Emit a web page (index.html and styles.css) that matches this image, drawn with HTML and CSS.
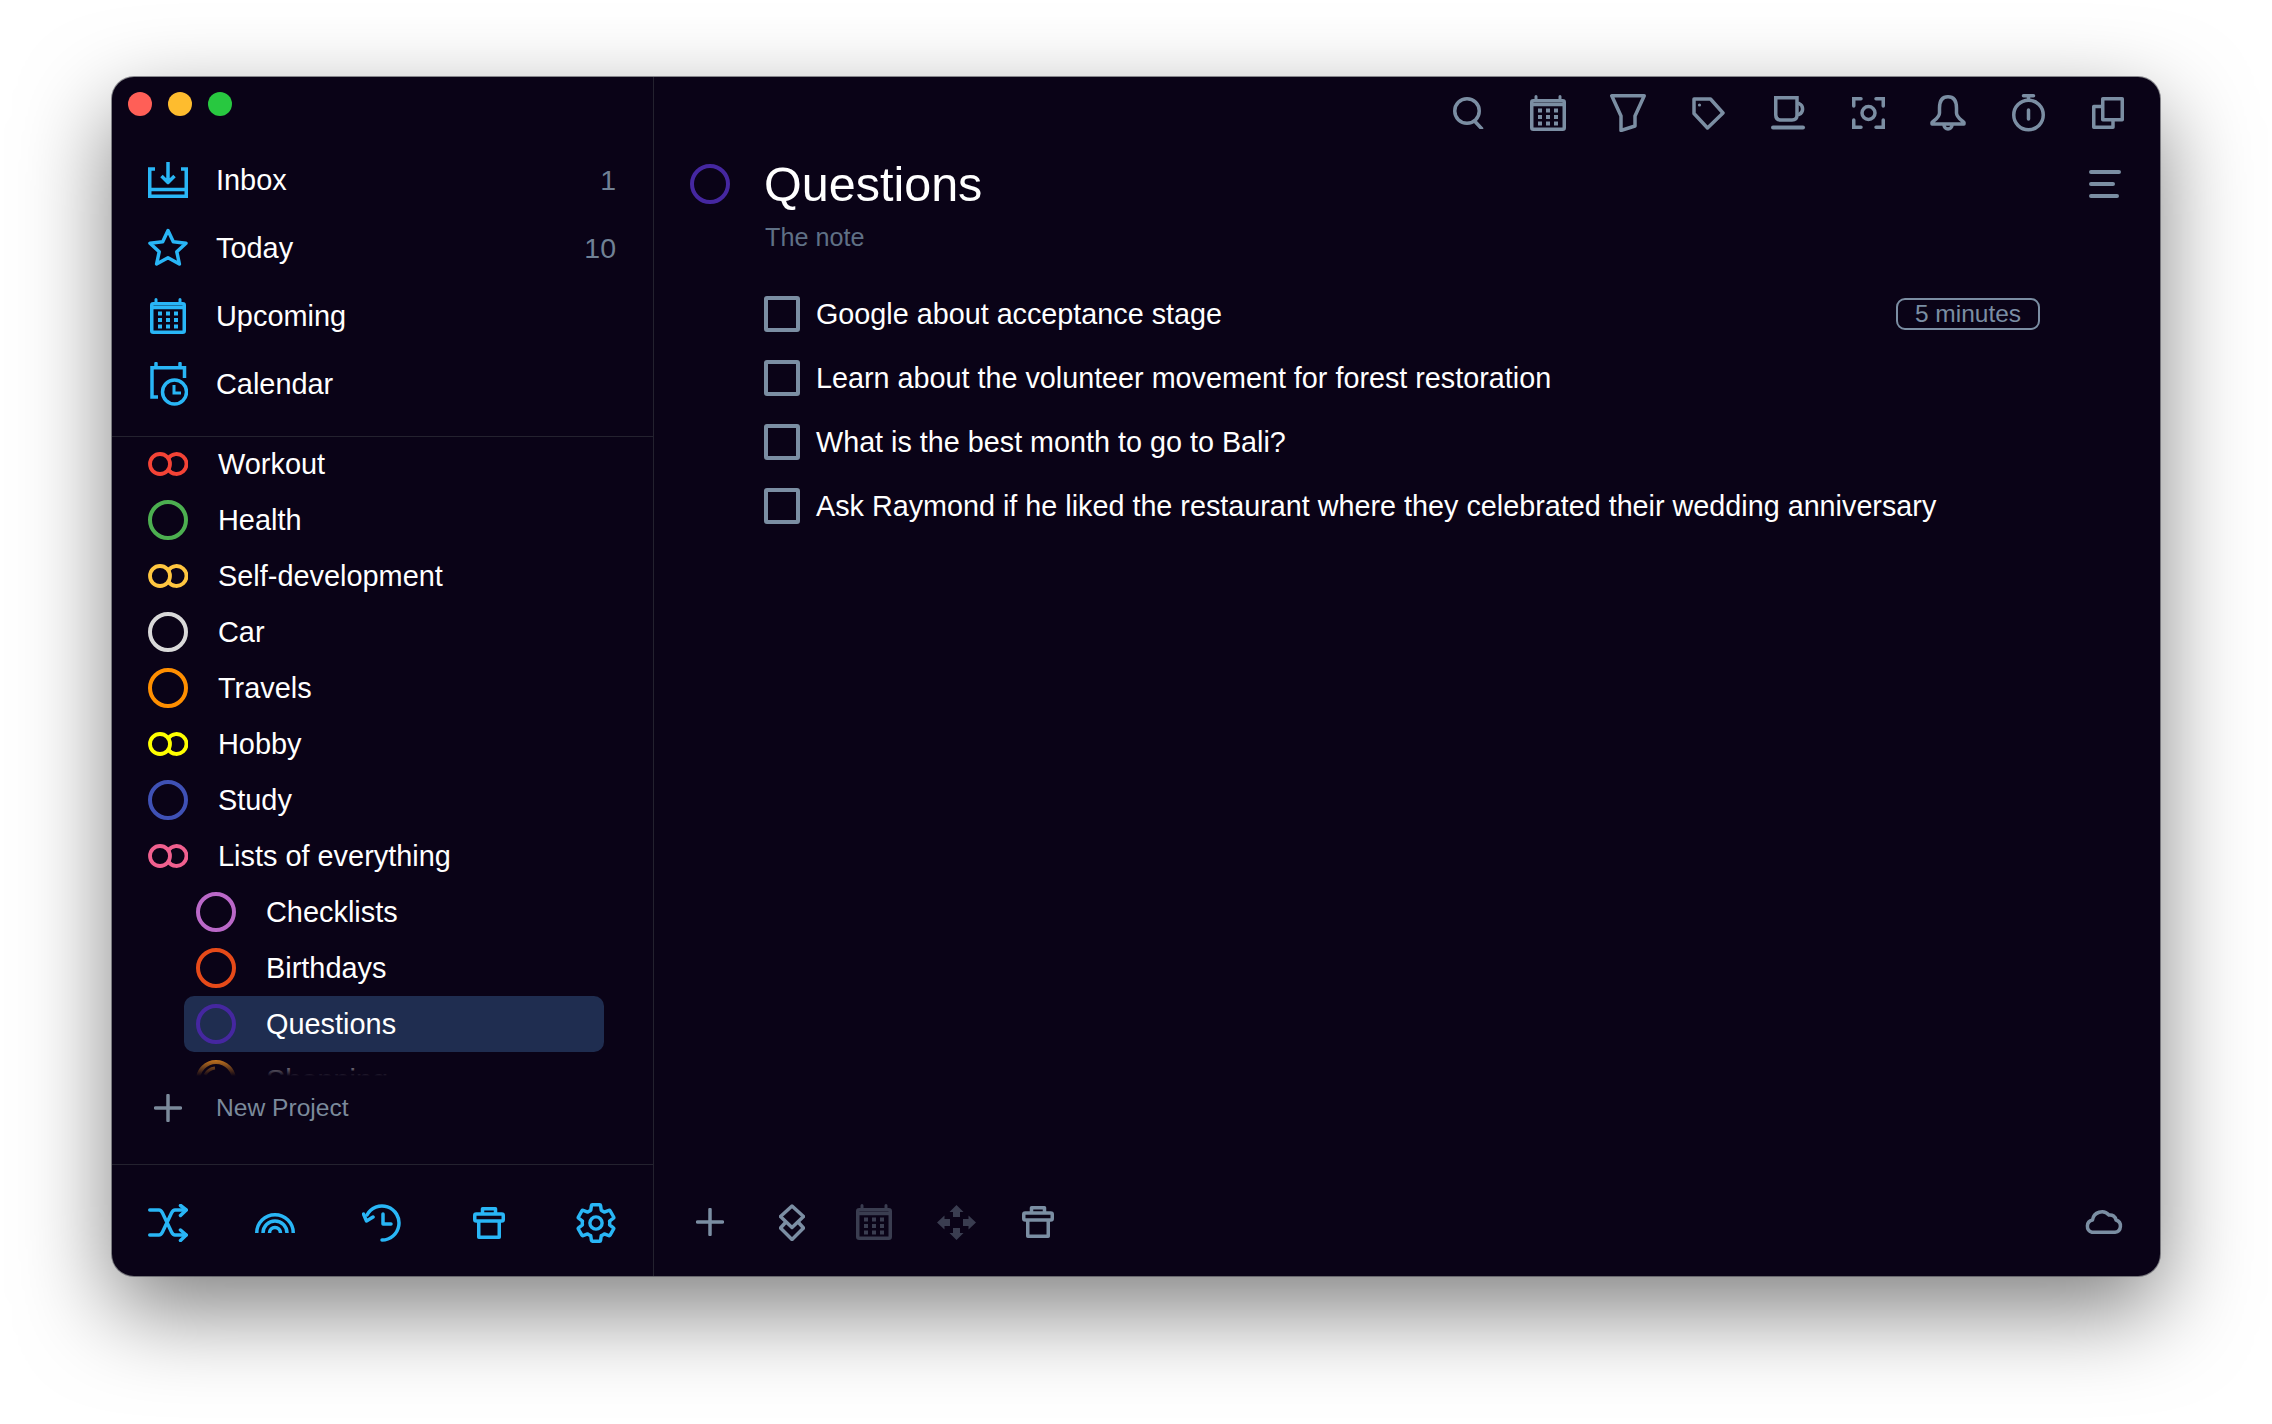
FILE: index.html
```html
<!DOCTYPE html>
<html lang="en">
<head>
<meta charset="utf-8">
<title>Questions</title>
<link rel="stylesheet" href="styles.css">
</head>
<body>
<svg class="defs" width="0" height="0" aria-hidden="true">
  <symbol id="cal" viewBox="0 0 36 36">
    <rect x="1.750" y="5.750" width="32.500" height="28.500" rx="1.500" fill="none" stroke="currentColor" stroke-width="3.500"/>
    <path d="M1.500 9.500H34.500" stroke="currentColor" stroke-width="3.500" fill="none"/>
    <path d="M6 1.500V5M30 1.500V5" stroke="currentColor" stroke-width="3" stroke-linecap="round" fill="none"/>
    <g fill="currentColor">
      <rect x="8" y="13.500" width="4" height="4"/><rect x="16" y="13.500" width="4" height="4"/><rect x="24" y="13.500" width="4" height="4"/>
      <rect x="8" y="20" width="4" height="4"/><rect x="16" y="20" width="4" height="4"/><rect x="24" y="20" width="4" height="4"/>
      <rect x="8" y="26.500" width="4" height="4"/><rect x="16" y="26.500" width="4" height="4"/><rect x="24" y="26.500" width="4" height="4"/>
    </g>
  </symbol>
  <symbol id="trash" viewBox="0 0 32 32">
    <path d="M9.500 7V1.750H22.500V7M5.750 14V30.250H26.250V14" fill="none" stroke="currentColor" stroke-width="3.500" stroke-linejoin="round"/>
    <rect x="1.750" y="7" width="28.500" height="7" rx="1.500" fill="none" stroke="currentColor" stroke-width="3.500"/>
  </symbol>
  <symbol id="ring" viewBox="0 0 40 40"><circle cx="20" cy="20" r="18" fill="none" stroke="currentColor" stroke-width="4"/></symbol>
  <symbol id="rings" viewBox="0 0 40 24">
    <circle cx="12" cy="12" r="10" fill="none" stroke="currentColor" stroke-width="3.800"/>
    <path d="M20.500 6A10 10 0 1 1 20.500 18" fill="none" stroke="currentColor" stroke-width="3.800"/>
  </symbol>
  <symbol id="plus" viewBox="0 0 28 28"><path d="M14 1.500V26.500M1.500 14H26.500" stroke="currentColor" stroke-width="3.500" stroke-linecap="round" fill="none"/></symbol>
</svg>

<div class="window">
  <aside class="sidebar">
    <div class="lights"><span class="light red"></span><span class="light yellow"></span><span class="light green"></span></div>

    <nav class="nav">
      <div class="nav-row">
        <span class="icon-box"><svg class="blue" width="40" height="36" viewBox="0 0 40 36" fill="none" stroke="currentColor" stroke-width="3.500"><path d="M7 7H1.750V34.250H38.250V7H33M1.750 27.500H38.250"/><path d="M20 0V20M13.500 14L20 20.500L26.500 14" stroke-linejoin="round"/></svg></span>
        <span class="label">Inbox</span><span class="count">1</span>
      </div>
      <div class="nav-row">
        <span class="icon-box"><svg class="blue icon-star" width="40" height="38" viewBox="0 0 40 38" fill="none" stroke="currentColor" stroke-width="3.500" stroke-linejoin="round"><path d="M20 2.500L25.300 13.800L38 15.200L28.800 23.800L31.400 36L20 29.800L8.600 36L11.200 23.800L2 15.200L14.700 13.800Z"/></svg></span>
        <span class="label">Today</span><span class="count">10</span>
      </div>
      <div class="nav-row">
        <span class="icon-box"><svg class="blue" width="36" height="36"><use href="#cal"/></svg></span>
        <span class="label">Upcoming</span>
      </div>
      <div class="nav-row">
        <span class="icon-box"><svg class="blue icon-calclock" width="38" height="44" viewBox="0 0 38 44" fill="none" stroke="currentColor" stroke-width="3.500"><path d="M6 1.500V5M30 1.500V5" stroke-linecap="round"/><path d="M8 35H2V5.750H34.500V16"/><circle cx="24.500" cy="30" r="12"/><path d="M24 23V31H31" stroke-width="3"/></svg></span>
        <span class="label">Calendar</span>
      </div>
    </nav>

    <div class="rule"></div>

    <div class="projects">
      <div class="project"><svg class="c-workout" width="40" height="24"><use href="#rings"/></svg><span class="label">Workout</span></div>
      <div class="project"><svg class="c-health" width="40" height="40"><use href="#ring"/></svg><span class="label">Health</span></div>
      <div class="project"><svg class="c-self" width="40" height="24"><use href="#rings"/></svg><span class="label">Self-development</span></div>
      <div class="project"><svg class="c-car" width="40" height="40"><use href="#ring"/></svg><span class="label">Car</span></div>
      <div class="project"><svg class="c-travels" width="40" height="40"><use href="#ring"/></svg><span class="label">Travels</span></div>
      <div class="project"><svg class="c-hobby" width="40" height="24"><use href="#rings"/></svg><span class="label">Hobby</span></div>
      <div class="project"><svg class="c-study" width="40" height="40"><use href="#ring"/></svg><span class="label">Study</span></div>
      <div class="project"><svg class="c-lists" width="40" height="24"><use href="#rings"/></svg><span class="label">Lists of everything</span></div>
      <div class="project child"><svg class="c-check" width="40" height="40"><use href="#ring"/></svg><span class="label">Checklists</span></div>
      <div class="project child"><svg class="c-birth" width="40" height="40"><use href="#ring"/></svg><span class="label">Birthdays</span></div>
      <div class="project child selected"><svg class="c-quest" width="40" height="40"><use href="#ring"/></svg><span class="label">Questions</span></div>
      <div class="project child"><svg class="c-shop" width="40" height="40" viewBox="0 0 40 40"><use href="#ring"/><path d="M9 15A13 13 0 0 1 19 8" fill="none" stroke="currentColor" stroke-width="3"/></svg><span class="label">Shopping</span></div>
    </div>

    <div class="new-project">
      <span class="icon-box"><svg class="grey" width="28" height="28"><use href="#plus"/></svg></span>
      <span class="new-label">New Project</span>
    </div>

    <div class="rule rule-foot"></div>

    <footer class="side-foot">
      <span class="tool"><svg class="blue" width="40" height="38" viewBox="0 0 40 38" fill="none" stroke="currentColor" stroke-width="3.500" stroke-linecap="round" stroke-linejoin="round"><path d="M1.750 6H11Q13 6 14.500 9L23.500 28Q25 31 27 31H38M1.750 31H11Q13 31 14.500 28L23.500 9Q25 6 27 6H38"/><path d="M32.500 1.500L38.250 6L32.500 11.500M32.500 26L38.250 31L32.500 36.500"/></svg></span>
      <span class="tool"><svg class="blue" width="40" height="22" viewBox="0 0 40 22" fill="none" stroke="currentColor" stroke-width="3.500"><path d="M1.750 21A18.250 18.250 0 0 1 38.250 21M8 21A12 12 0 0 1 32 21M14.500 21A5.500 5.500 0 0 1 25.500 21"/></svg></span>
      <span class="tool"><svg class="blue" width="40" height="38" viewBox="0 0 40 38" fill="none" stroke="currentColor" stroke-width="3.500" stroke-linecap="round" stroke-linejoin="round"><path d="M20 36A17 17 0 1 0 5 11"/><path d="M1.500 10L4.500 17L11 13"/><path d="M21 10V20H29"/></svg></span>
      <span class="tool"><svg class="blue" width="32" height="32"><use href="#trash"/></svg></span>
      <span class="tool"><svg class="blue" width="40" height="40" viewBox="1.500 1.500 21 21" fill="none" stroke="currentColor" stroke-width="1.800" stroke-linejoin="round"><path d="M19.140 12.940c.04-.3.06-.61.06-.94 0-.32-.02-.64-.07-.94l2.030-1.580c.18-.14.23-.41.12-.61l-1.920-3.320c-.12-.22-.37-.29-.59-.22l-2.390.96c-.5-.38-1.030-.7-1.620-.94l-.36-2.540c-.04-.24-.24-.41-.48-.41h-3.840c-.24 0-.43.17-.47.41l-.36 2.540c-.59.24-1.130.57-1.620.94l-2.390-.96c-.22-.08-.47 0-.59.22L2.740 8.870c-.12.21-.08.47.12.61l2.030 1.580c-.05.3-.09.63-.09.94s.02.64.07.94l-2.030 1.580c-.18.14-.23.41-.12.61l1.920 3.320c.12.22.37.29.59.22l2.390-.96c.5.38 1.030.7 1.620.94l.36 2.540c.05.24.24.41.48.41h3.840c.24 0 .44-.17.47-.41l.36-2.540c.59-.24 1.130-.56 1.620-.94l2.390.96c.22.08.47 0 .59-.22l1.920-3.320c.12-.22.07-.47-.12-.61l-2.010-1.580z"/><circle cx="12" cy="12" r="3.200"/></svg></span>
    </footer>
  </aside>

  <main class="main">
    <div class="toolbar">
      <span class="tool tool-search"><svg width="32" height="32" viewBox="0 0 32 32" fill="none" stroke="currentColor" stroke-width="3.500" stroke-linecap="round"><circle cx="14" cy="14" r="12.250"/><path d="M22 24.500L28.500 31.500"/></svg></span>
      <span class="tool"><svg width="36" height="36"><use href="#cal"/></svg></span>
      <span class="tool"><svg width="36" height="38" viewBox="0 0 36 38" fill="none" stroke="currentColor" stroke-width="3.500" stroke-linejoin="round"><path d="M1.750 1.750H34.250L25 22V32L11 36.500V22Z"/></svg></span>
      <span class="tool"><svg width="33" height="33" viewBox="0 0 33 33" fill="none" stroke="currentColor" stroke-width="3.500" stroke-linejoin="round"><path d="M2 2H18.500L31 16L15.500 31L2 16.500Z"/><circle cx="7.500" cy="8" r="1.600" fill="currentColor" stroke="none"/></svg></span>
      <span class="tool"><svg width="35" height="35" viewBox="0 0 35 35" fill="none" stroke="currentColor" stroke-width="3.500"><path d="M4.750 1.750H26V19Q26 24 21 24H9.750Q4.750 24 4.750 19Z"/><path d="M26 7.500H28A6 6 0 0 1 28 18.500H26"/><path d="M2 31.500H32" stroke-width="4" stroke-linecap="round"/></svg></span>
      <span class="tool"><svg width="33" height="32" viewBox="0 0 33 32" fill="none" stroke="currentColor" stroke-width="3.500" stroke-linecap="round"><path d="M9 1.750H1.750V9M24 1.750H31.250V9M9 30.250H1.750V23M24 30.250H31.250V23"/><circle cx="16.500" cy="16" r="6.500"/></svg></span>
      <span class="tool"><svg width="36" height="36" viewBox="0 0 36 36" fill="none" stroke="currentColor" stroke-width="3.500" stroke-linejoin="round"><path d="M18 1.750C11 1.750 9.500 7 9.500 13V18C9.500 22 6 24 2 27.500V29H34V27.500C30 24 26.500 22 26.500 18V13C26.500 7 25 1.750 18 1.750Z"/><path d="M14 30A4 4 0 0 0 22 30"/></svg></span>
      <span class="tool"><svg width="33" height="38" viewBox="0 0 33 38" fill="none" stroke="currentColor" stroke-width="3.500" stroke-linecap="round"><circle cx="16.500" cy="21" r="14.750"/><path d="M16.500 16V25"/><path d="M11.500 1.750H21.500"/><path d="M16.500 2V6"/></svg></span>
      <span class="tool"><svg width="32" height="32" viewBox="0 0 32 32" fill="none" stroke="currentColor" stroke-width="3.500" stroke-linejoin="round"><rect x="10.750" y="1.750" width="19.500" height="21"/><path d="M10.500 9.500H1.750V30.250H21V22.500"/></svg></span>
    </div>

    <header class="head">
      <svg class="c-quest" width="40" height="40"><use href="#ring"/></svg>
      <h1 class="title">Questions</h1>
      <svg class="menu" width="32" height="28" viewBox="0 0 32 28" fill="none" stroke="currentColor" stroke-width="4" stroke-linecap="round"><path d="M2 2H30M2 14H24M2 26H28"/></svg>
    </header>
    <p class="note">The note</p>

    <ul class="tasks">
      <li class="task"><span class="box"></span><span class="task-text">Google about acceptance stage</span><span class="pill">5 minutes</span></li>
      <li class="task"><span class="box"></span><span class="task-text">Learn about the volunteer movement for forest restoration</span></li>
      <li class="task"><span class="box"></span><span class="task-text">What is the best month to go to Bali?</span></li>
      <li class="task"><span class="box"></span><span class="task-text">Ask Raymond if he liked the restaurant where they celebrated their wedding anniversary</span></li>
    </ul>

    <div class="actions">
      <span class="tool"><svg width="28" height="28"><use href="#plus"/></svg></span>
      <span class="tool"><svg width="26" height="37" viewBox="0 0 26 37" fill="none" stroke="currentColor" stroke-width="3.500" stroke-linejoin="round"><path d="M13 2L24.500 12.500L13 23.500L1.500 12.500Z"/><path d="M6.500 18.500L1.500 24L13 35.500L24.500 24L19.500 18.500"/></svg></span>
      <span class="tool dim"><svg width="36" height="36"><use href="#cal"/></svg></span>
      <span class="tool dim"><svg width="39" height="35" viewBox="0 0 39 35" fill="currentColor"><path d="M19.500 0L26.500 7H23V12H16V7H12.500ZM19.500 35L26.500 28H23V23H16V28H12.500ZM0 17.500L7.500 10.500V14H13V21H7.500V24.500ZM39 17.500L31.500 10.500V14H26V21H31.500V24.500Z"/></svg></span>
      <span class="tool"><svg width="32" height="32"><use href="#trash"/></svg></span>
      <span class="tool cloud"><svg width="40" height="26" viewBox="0 0 40 26" fill="none" stroke="currentColor" stroke-width="3.500" stroke-linejoin="round"><path d="M9 24.250H32A6.300 6.300 0 0 0 33 12A6 6 0 0 0 26 7A9.500 9.500 0 0 0 9.500 12A6.300 6.300 0 0 0 9 24.250Z"/></svg></span>
    </div>
  </main>
</div>
</body>
</html>
```
FILE: styles.css
```css
* { box-sizing: border-box; }
html, body { margin: 0; height: 100%; }
body {
  background: #fff;
  padding: 77px 112px 0;
  font-family: "Liberation Sans", Arial, sans-serif;
  color: #fff;
  overflow: hidden;
}
.defs { position: absolute; }
svg { display: block; flex: none; }

.window {
  display: flex;
  width: 2048px;
  height: 1199px;
  background: #0a0317;
  border-radius: 22px;
  box-shadow: 0 0 0 1px rgba(60, 60, 70, .55), 0 34px 90px rgba(0, 0, 0, .5);
  overflow: hidden;
}

/* sidebar */
.sidebar {
  width: 542px;
  flex: none;
  display: flex;
  flex-direction: column;
  border-right: 1px solid #24222f;
}
.lights { display: flex; gap: 16px; padding: 15px 0 0 16px; height: 69px; }
.light { width: 24px; height: 24px; border-radius: 50%; }
.red { background: #ff5f57; }
.yellow { background: #febc2e; }
.green { background: #28c840; }

.nav { margin-bottom: 18px; }
.nav-row {
  display: flex;
  align-items: center;
  height: 68px;
  padding: 0 37px 0 36px;
}
.icon-box { width: 40px; display: flex; justify-content: center; flex: none; }
.nav-row .label { margin-left: 28px; flex: 1; }
.label { font-size: 28.9px; white-space: nowrap; }
.count { font-size: 28.5px; color: #708195; }
.blue { color: #29b6f6; }
.grey { color: #7b8a9b; }
.icon-calclock { margin-left: 2px; }
.icon-star { margin-top: -3px; }

.rule { height: 1px; background: #24222f; flex: none; }
.rule-foot { margin-top: 24px; }

.projects { position: relative; height: 640px; margin-top: -1px; overflow: hidden; flex: none; }
.projects::after {
  content: "";
  position: absolute;
  left: 0; right: 0; bottom: 0;
  height: 20px;
  background: linear-gradient(rgba(10, 3, 23, 0), #0a0317);
}
.project {
  display: flex;
  align-items: center;
  height: 56px;
  padding-left: 36px;
  gap: 30px;
}
.project.child { margin: 0 49px 0 72px; padding-left: 12px; border-radius: 10px; }
.project.selected { background: #1f2d50; }
.c-workout { color: #f44336; }
.c-health { color: #4caf50; }
.c-self { color: #ffc640; }
.c-car { color: #d9d9d9; }
.c-travels { color: #ff8f00; }
.c-hobby { color: #ffff00; }
.c-study { color: #3f51b5; }
.c-lists { color: #f0608f; }
.c-check { color: #ba68c8; }
.c-birth { color: #e64a19; }
.c-quest { color: #4527a0; }
.c-shop { color: #f09020; }

.new-project {
  display: flex;
  align-items: center;
  height: 64px;
  padding-left: 36px;
  gap: 28px;
}
.new-label { font-size: 24.6px; color: #7b8a9b; }

.side-foot {
  flex: 1;
  display: flex;
  align-items: center;
  justify-content: space-between;
  padding: 4px 37px 0 36px;
}

/* main */
.main {
  flex: 1;
  min-width: 0;
  display: flex;
  flex-direction: column;
  color: #7b8ea3;
}
.toolbar {
  display: flex;
  justify-content: flex-end;
  gap: 40px;
  height: 72px;
  padding: 0 32px 0 0;
  align-items: center;
}
.tool { width: 40px; display: flex; justify-content: center; flex: none; }
.tool-search svg { margin-left: 2px; }
.dim { color: #3a3d50; }

.head {
  display: flex;
  align-items: center;
  height: 70px;
  padding: 0 39px 0 36px;
}
.title {
  margin: 0 0 0 34px;
  font-size: 48.5px;
  font-weight: 400;
  color: #fff;
  flex: 1;
}
.note {
  margin: 3px 0 0 111px;
  font-size: 25.2px;
  line-height: 30px;
  color: #5f7085;
}
.tasks { list-style: none; margin: 30px 0 0; padding: 0 120px 0 110px; }
.task { display: flex; align-items: center; height: 64px; }
.box {
  width: 36px;
  height: 36px;
  border: 4px solid #7b8ea3;
  border-radius: 3px;
  flex: none;
  margin-right: 16px;
}
.task-text { font-size: 28.75px; white-space: nowrap; color: #fff; flex: 1; }
.pill {
  width: 144px;
  height: 32px;
  border: 2.5px solid #7b8ea3;
  border-radius: 9px;
  font-size: 24.5px;
  line-height: 27px;
  text-align: center;
  color: #7b8ea3;
}
.actions {
  margin-top: auto;
  height: 108px;
  display: flex;
  align-items: center;
  gap: 42px;
  padding: 0 36px;
}
.cloud { margin: -3px 1px 0 auto; }
```
